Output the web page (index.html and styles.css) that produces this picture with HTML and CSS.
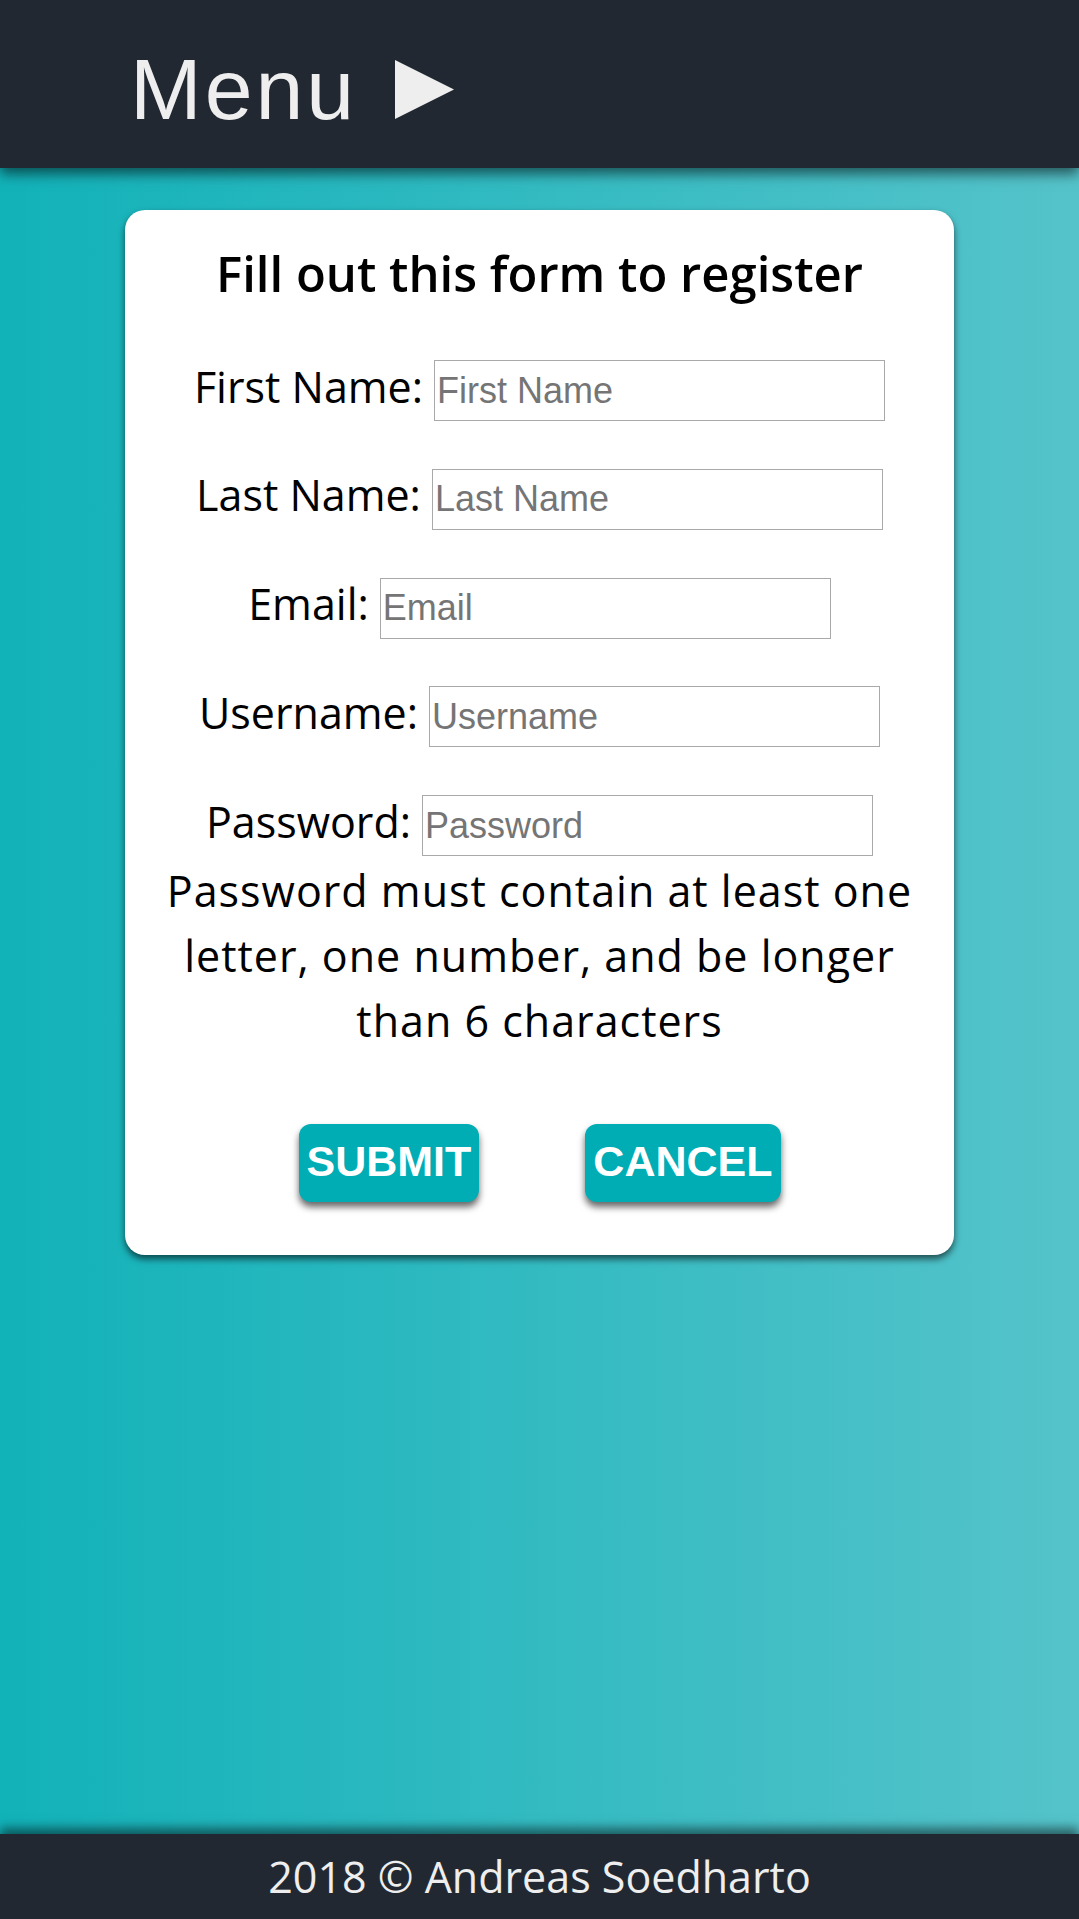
FILE: index.html
```html
<!DOCTYPE html>
<html lang="en">
<head>
<meta charset="utf-8">
<title>Register</title>
<link rel="stylesheet" href="styles.css">
</head>
<body>
<header class="topbar">
  <span class="menu-label">Menu</span><svg class="menu-arrow" viewBox="0 0 59 59" width="59" height="59" aria-hidden="true"><polygon points="0,0 59,29.5 0,59" fill="#eeeeee"/></svg>
</header>
<main class="page">
  <form class="card">
    <h1 class="card-title">Fill out this form to register</h1>
    <div class="fields">
      <div class="field"><label class="field-label" for="fn">First Name:</label><input class="field-input" id="fn" type="text" placeholder="First Name"></div>
      <div class="field"><label class="field-label" for="ln">Last Name:</label><input class="field-input" id="ln" type="text" placeholder="Last Name"></div>
      <div class="field"><label class="field-label" for="em">Email:</label><input class="field-input" id="em" type="text" placeholder="Email"></div>
      <div class="field"><label class="field-label" for="un">Username:</label><input class="field-input" id="un" type="text" placeholder="Username"></div>
      <div class="field"><label class="field-label" for="pw">Password:</label><input class="field-input" id="pw" type="password" placeholder="Password"></div>
    </div>
    <p class="hint">Password must contain at least one letter, one number, and be longer than 6 characters</p>
    <div class="actions">
      <button class="btn" type="submit">SUBMIT</button>
      <button class="btn" type="button">CANCEL</button>
    </div>
  </form>
</main>
<footer class="footer">2018 © Andreas Soedharto</footer>
</body>
</html>
```
FILE: styles.css
```css
html, body {
  margin: 0;
  padding: 0;
}

body {
  min-height: 100vh;
  display: flex;
  flex-direction: column;
  background: linear-gradient(to right, #12b2b9, #55c3ca);
  font-family: "Open Sans", "Noto Sans", sans-serif;
  color: #000;
}

.topbar {
  height: 168px;
  box-sizing: border-box;
  padding: 40px 0 0 130px;
  background: #222831;
  color: #eeeeee;
  font-family: "Liberation Sans", Arial, sans-serif;
  font-size: 86px;
  letter-spacing: 3px;
  white-space: nowrap;
  box-shadow: 0 6px 12px rgba(0, 0, 0, 0.55);
  position: relative;
  z-index: 1;
}

.menu-arrow {
  margin-left: 38px;
  vertical-align: baseline;
}

.page {
  flex: 1;
  padding-top: 42px;
}

.card {
  width: 829px;
  box-sizing: border-box;
  margin: 0 auto;
  background: #ffffff;
  border-radius: 20px;
  padding: 33px 30px 53px;
  box-shadow: 0 4px 7px rgba(0, 0, 0, 0.6);
}

.card-title {
  margin: 0 0 57px;
  font-size: 49px;
  font-weight: 600;
  line-height: 60px;
  text-align: center;
}

.fields {
  display: flex;
  flex-direction: column;
  gap: 47.75px;
}

.field {
  display: flex;
  justify-content: center;
  align-items: baseline;
  gap: 11px;
}

.field-label {
  font-size: 43px;
  line-height: 1;
}

.field-input {
  width: 451px;
  height: 61px;
  box-sizing: border-box;
  margin: 0;
  padding: 0 2px;
  border: 1px solid #a9a9a9;
  border-radius: 0;
  background: #ffffff;
  color: #000;
  font: 36px "Liberation Sans", Arial, sans-serif;
}

.field-input::placeholder {
  color: #757575;
  opacity: 1;
}

.hint {
  margin: 1.5px 0 0;
  font-size: 43px;
  line-height: 65px;
  letter-spacing: 1px;
  text-align: center;
}

.actions {
  display: flex;
  justify-content: center;
  gap: 106px;
  margin-top: 71px;
}

.btn {
  margin: 0;
  padding: 12px 8px 16px;
  border: none;
  border-radius: 12px;
  background: #00adb5;
  color: #ffffff;
  font: bold 43px/50px "Liberation Sans", Arial, sans-serif;
  box-shadow: 0 5px 7px rgba(0, 0, 0, 0.6);
}

.footer {
  height: 85px;
  background: #222831;
  color: #eeeeee;
  font-size: 43px;
  line-height: 85px;
  text-align: center;
  box-shadow: 0 -6px 10px rgba(0, 0, 0, 0.5);
  position: relative;
}
```
